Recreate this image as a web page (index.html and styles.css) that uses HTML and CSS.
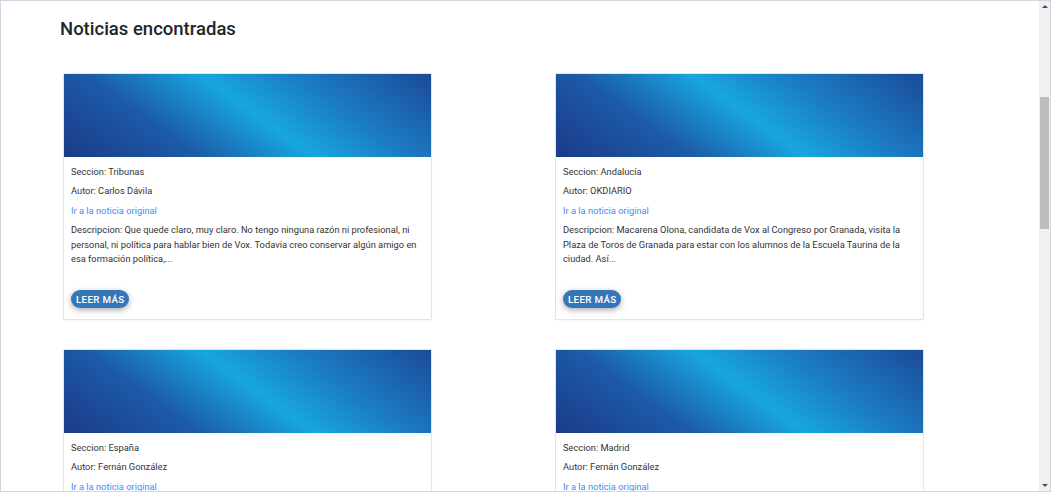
FILE: index.html
```html
<!DOCTYPE html>
<html lang="es">
<head>
<meta charset="utf-8">
<title>Noticias encontradas</title>
<link rel="stylesheet" href="styles.css">
</head>
<body>
<div class="frame">
  <main class="content">
    <h1 class="title">Noticias encontradas</h1>
    <div class="grid">
      <article class="card">
        <div class="card-img"></div>
        <div class="card-body">
          <p>Seccion: Tribunas</p>
          <p>Autor: Carlos Dávila</p>
          <p><a href="#" class="link">Ir a la noticia original</a></p>
          <p>Descripcion: Que quede claro, muy claro. No tengo ninguna razón ni profesional, ni personal, ni política para hablar bien de Vox. Todavía creo conservar algún amigo en esa formación política,...</p>
          <button class="btn">LEER MÁS</button>
        </div>
      </article>
      <article class="card">
        <div class="card-img"></div>
        <div class="card-body">
          <p>Seccion: Andalucía</p>
          <p>Autor: OKDIARIO</p>
          <p><a href="#" class="link">Ir a la noticia original</a></p>
          <p>Descripcion: Macarena Olona, candidata de Vox al Congreso por Granada, visita la Plaza de Toros de Granada para estar con los alumnos de la Escuela Taurina de la ciudad. Así...</p>
          <button class="btn">LEER MÁS</button>
        </div>
      </article>
      <article class="card">
        <div class="card-img"></div>
        <div class="card-body">
          <p>Seccion: España</p>
          <p>Autor: Fernán González</p>
          <p><a href="#" class="link">Ir a la noticia original</a></p>
          <p>Descripcion: ...</p>
        </div>
      </article>
      <article class="card">
        <div class="card-img"></div>
        <div class="card-body">
          <p>Seccion: Madrid</p>
          <p>Autor: Fernán González</p>
          <p><a href="#" class="link">Ir a la noticia original</a></p>
          <p>Descripcion: ...</p>
        </div>
      </article>
    </div>
  </main>
  <div class="scrollbar">
    <div class="arrow arrow-up"></div>
    <div class="track"><div class="thumb"></div></div>
    <div class="arrow arrow-down"></div>
  </div>
</div>
</body>
</html>
```

FILE: styles.css
```css
html, body {
  margin: 0;
  padding: 0;
  background: #ffffff;
}
body {
  font-family: Roboto, "Liberation Sans", sans-serif;
  color: #212529;
  overflow: hidden;
}
.frame {
  width: 1051px;
  height: 492px;
  box-sizing: border-box;
  border: 1px solid #cfd8e1;
  display: flex;
  overflow: hidden;
}
.content {
  flex: 1;
  overflow: hidden;
  padding: 0 0 0 59px;
}
.title {
  margin: 16px 0 0 0;
  font-size: 18.5px;
  font-weight: 500;
  line-height: 24px;
  color: #212529;
}
.grid {
  display: grid;
  grid-template-columns: 369px 369px;
  column-gap: 123px;
  row-gap: 29px;
  margin: 32px 0 0 3px;
}
.card {
  border: 1px solid #e4e4e4;
  border-radius: 2px;
  background: #fff;
  box-shadow: 0 1px 2px rgba(0,0,0,0.04);
}
.card-img {
  height: 83px;
  background: linear-gradient(36deg, #1b3b88 0%, #1c5aa8 28%, #18a6de 52%, #1b7bc3 72%, #1b4a98 100%);
}
.card-body {
  padding: 7.5px 7px 11px 7px;
  font-size: 9.3px;
  line-height: 14.5px;
  color: #333;
}
.card-body p {
  margin: 0 0 5px 0;
}
.link {
  color: #3f8df2;
  text-decoration: none;
}
.btn {
  display: block;
  margin-top: 23.5px;
  height: 18px;
  padding: 0 5px;
  border: none;
  border-radius: 9px;
  background: #3576b9;
  color: #fff;
  font-family: Roboto, "Liberation Sans", sans-serif;
  font-size: 9.8px;
  font-weight: 500;
  letter-spacing: 0.3px;
  box-shadow: 0 2px 5px rgba(0,0,0,0.2), 0 2px 8px rgba(0,0,0,0.15);
}
.scrollbar {
  width: 11px;
  background: #f0f0f0;
  display: flex;
  flex-direction: column;
}
.arrow {
  height: 11px;
  display: flex;
  align-items: center;
  justify-content: center;
}
.arrow-up::before {
  content: "";
  border-left: 3px solid transparent;
  border-right: 3px solid transparent;
  border-bottom: 3px solid #505050;
}
.arrow-down::before {
  content: "";
  border-left: 3px solid transparent;
  border-right: 3px solid transparent;
  border-top: 3px solid #505050;
}
.track {
  flex: 1;
  padding: 85px 1px 0 1px;
}
.thumb {
  height: 132px;
  background: #bdbdbd;
}
```
